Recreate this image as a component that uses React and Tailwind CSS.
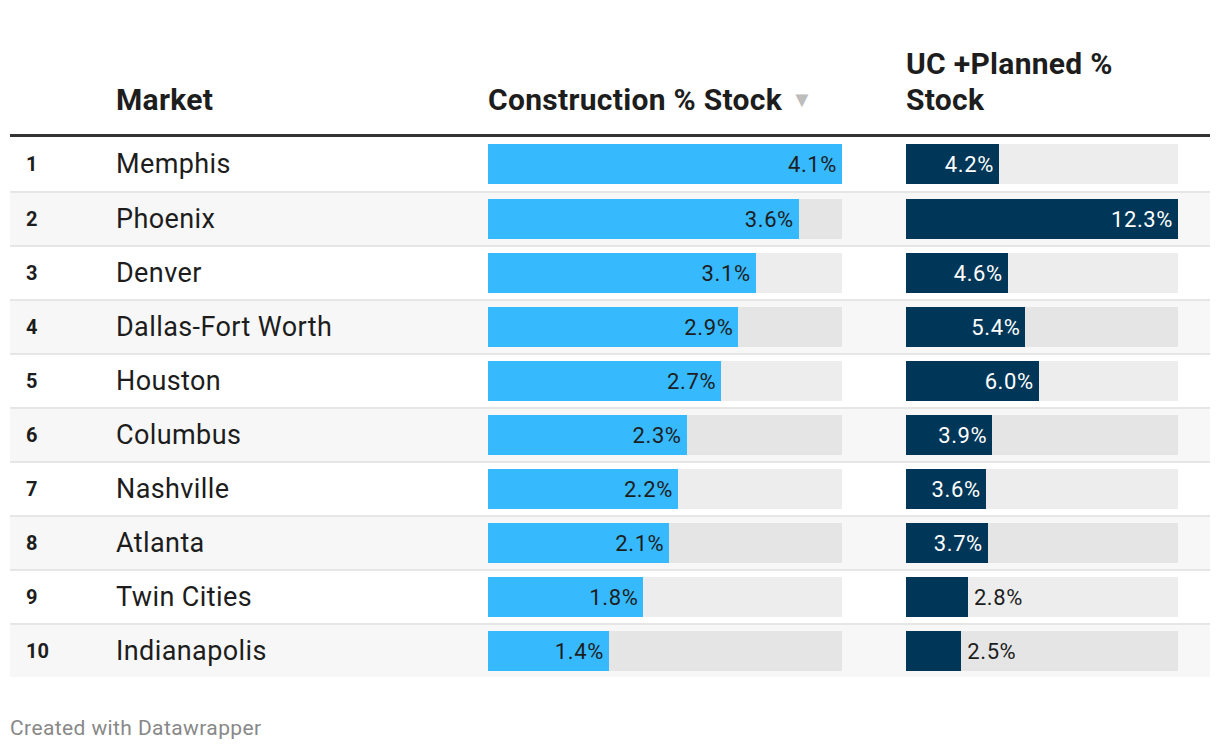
const rows = [
  { rank: 1, market: 'Memphis', c: 4.1, uc: 4.2 },
  { rank: 2, market: 'Phoenix', c: 3.6, uc: 12.3 },
  { rank: 3, market: 'Denver', c: 3.1, uc: 4.6 },
  { rank: 4, market: 'Dallas-Fort Worth', c: 2.9, uc: 5.4 },
  { rank: 5, market: 'Houston', c: 2.7, uc: 6.0 },
  { rank: 6, market: 'Columbus', c: 2.3, uc: 3.9 },
  { rank: 7, market: 'Nashville', c: 2.2, uc: 3.6 },
  { rank: 8, market: 'Atlanta', c: 2.1, uc: 3.7 },
  { rank: 9, market: 'Twin Cities', c: 1.8, uc: 2.8 },
  { rank: 10, market: 'Indianapolis', c: 1.4, uc: 2.5 },
]

function Bar({ value, max, dark }) {
  const pct = (value / max) * 100
  const label = `${value.toFixed(1)}%`
  // small bars put the label outside
  const inside = pct > 24
  return (
    <div className="flex h-10 w-full bg-black/[0.07]">
      <div
        className={`flex h-full items-center justify-end ${dark ? 'bg-[#003657] text-white' : 'bg-[#36b9fd] text-[#1d1d1d]'}`}
        style={{ width: `${pct}%` }}
      >
        {inside && <span className="pr-[5px] text-[22px] tracking-[0.6px]">{label}</span>}
      </div>
      {!inside && (
        <span className="flex items-center pl-[6px] text-[22px] tracking-[0.6px] text-[#1d1d1d]">{label}</span>
      )}
    </div>
  )
}

export default function App() {
  return (
    <div className="bg-white px-[10px] text-[#1d1d1d]" style={{ fontFamily: 'Roboto, "Liberation Sans", sans-serif' }}>
      {/* Header */}
      <div className="flex h-[134px] items-end pb-[16px] text-[30px] font-bold leading-[36px] tracking-[0.3px]">
        <div className="w-[106px]" />
        <div className="w-[372px]">Market</div>
        <div className="w-[418px] flex items-center">
          Construction % Stock
          <span className="ml-[9px] text-[22px] text-[#bdbdbd]">▼</span>
        </div>
        <div className="w-[272px]">UC +Planned %<br />Stock</div>
      </div>
      <div className="h-[3px] bg-[#333]" />

      {/* Rows */}
      {rows.map((r, i) => (
        <div
          key={r.rank}
          className={`flex h-[54px] items-center ${i > 0 ? 'border-t-2 border-[#e6e6e6]' : ''} ${i % 2 === 1 ? 'bg-[#f7f7f7]' : 'bg-white'}`}
        >
          <div className="w-[106px] pl-4 text-[20px] font-bold">{r.rank}</div>
          <div className="w-[372px] text-[27px] tracking-[0.4px]">{r.market}</div>
          <div className="w-[354px]">
            <Bar value={r.c} max={4.1} />
          </div>
          <div className="w-[64px]" />
          <div className="w-[272px]">
            <Bar value={r.uc} max={12.3} dark />
          </div>
        </div>
      ))}

      <div className="pt-[36px] pb-4 text-[21px] tracking-[0.4px] text-[#888]">Created with Datawrapper</div>
    </div>
  )
}
